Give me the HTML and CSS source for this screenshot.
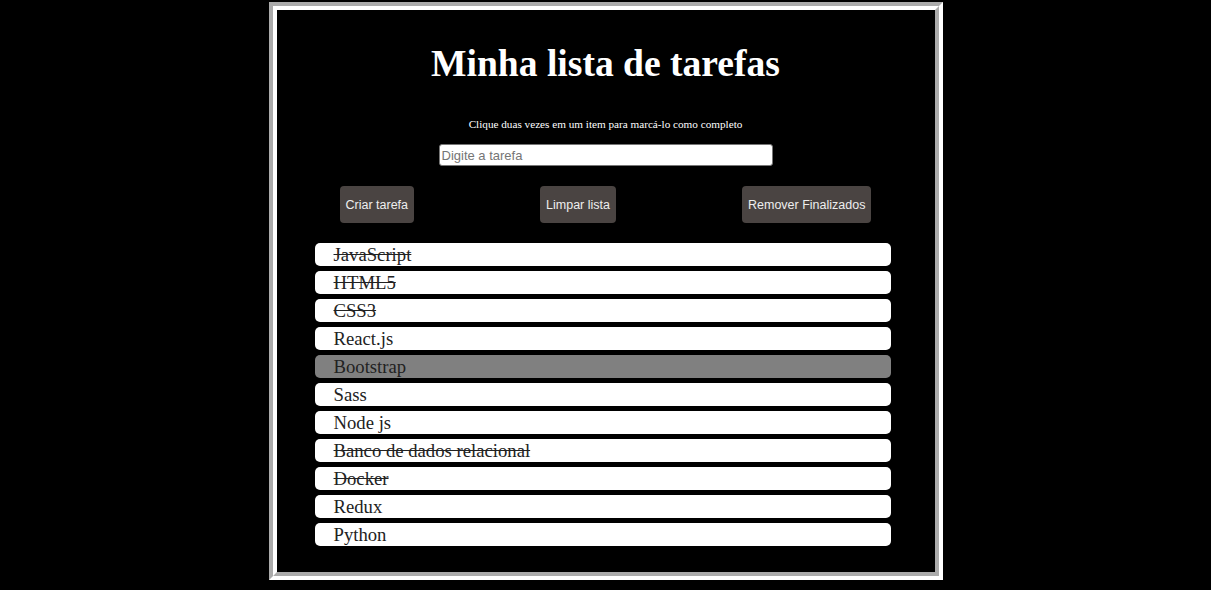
FILE: index.html
```html
<!DOCTYPE html>
<html lang="pt-BR">
<head>
<meta charset="utf-8">
<title>Minha lista de tarefas</title>
<link rel="stylesheet" href="styles.css">
</head>
<body>
<main class="app">
  <h1 class="title">Minha lista de tarefas</h1>
  <p class="hint">Clique duas vezes em um item para marcá-lo como completo</p>
  <div class="input-row">
    <input class="task-input" type="text" placeholder="Digite a tarefa">
  </div>
  <div class="actions">
    <button class="btn">Criar tarefa</button>
    <button class="btn">Limpar lista</button>
    <button class="btn">Remover Finalizados</button>
  </div>
  <ol class="tasks">
    <li class="task done">JavaScript</li>
    <li class="task done">HTML5</li>
    <li class="task done">CSS3</li>
    <li class="task">React.js</li>
    <li class="task selected">Bootstrap</li>
    <li class="task">Sass</li>
    <li class="task">Node js</li>
    <li class="task done">Banco de dados relacional</li>
    <li class="task done">Docker</li>
    <li class="task">Redux</li>
    <li class="task">Python</li>
  </ol>
</main>
</body>
</html>
```
FILE: styles.css
```css
html, body {
  margin: 0;
  padding: 0;
  background: #000;
}
body {
  padding-top: 2px;
  font-family: "Liberation Serif", "Times New Roman", serif;
  color: #fff;
}
.app {
  box-sizing: border-box;
  width: 674px;
  height: 578px;
  margin: 0 auto;
  border: 8px groove #fff;
  background: #000;
  padding-top: 1px;
}
.title {
  margin: 28px 0 0;
  text-align: center;
  font-size: 37.6px;
  line-height: 50px;
  font-weight: bold;
}
.hint {
  margin: 28px 0 0;
  text-align: center;
  font-size: 11.2px;
  line-height: 14px;
}
.input-row {
  display: flex;
  justify-content: center;
  margin-top: 13px;
}
.task-input {
  box-sizing: border-box;
  width: 334px;
  height: 22px;
  border: 1px solid #767676;
  border-radius: 3px;
  padding: 0 2px;
  font-family: "Liberation Sans", Arial, sans-serif;
  font-size: 13px;
  background: #fff;
  color: #000;
}
.task-input::placeholder {
  color: #757575;
}
.actions {
  display: flex;
  justify-content: space-around;
  margin-top: 20px;
}
.btn {
  height: 37px;
  padding: 0 6px;
  border: none;
  border-radius: 4px;
  background: #4a4442;
  color: #eee;
  font-family: "Liberation Sans", Arial, sans-serif;
  font-size: 12.5px;
}
.tasks {
  list-style: none;
  margin: 20px 44px 0 38px;
  padding: 0;
  display: flex;
  flex-direction: column;
  gap: 5px;
}
.task {
  height: 23px;
  line-height: 23px;
  padding-left: 19px;
  border-radius: 5px;
  background: #fff;
  color: #222;
  font-size: 18.7px;
}
.task.done {
  text-decoration: line-through;
}
.task.selected {
  background: #808080;
}
```
